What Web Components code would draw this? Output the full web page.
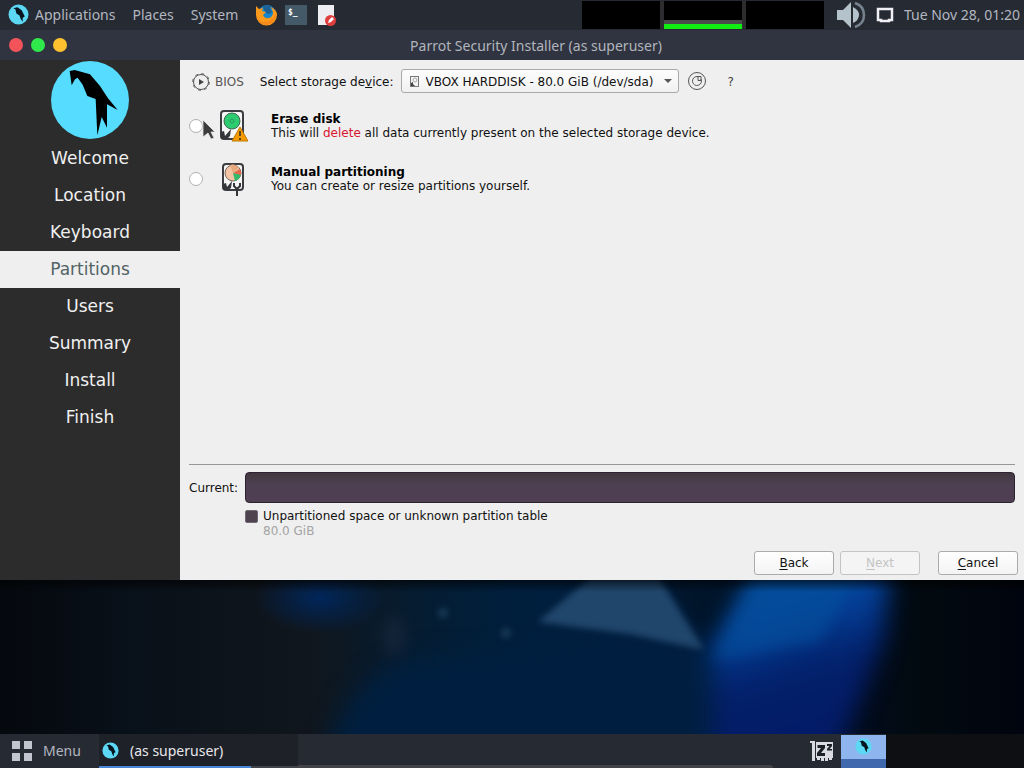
<!DOCTYPE html>
<html lang="en">
<head>
<meta charset="utf-8">
<title>Parrot Security Installer</title>
<style>
    html, body {
        height: 100%;
        margin: 0;
    }
    body {
        display: flex;
        flex-direction: column;
        overflow: hidden;
        background: #05090f;
        font-family: "Noto Sans", sans-serif;
        font-size: 14px;
        --panel: #262a33;
        --panel-text: #b3b7c0;
        --paper: #efefef;
        --side: #2c2c2c;
    }
    installer-window {
        flex: 1;
        min-height: 0;
    }
    em {
        font-style: normal;
        color: #d8152f;
    }
</style>
</head>
<body>
<top-panel></top-panel>
<installer-window heading="Parrot Security Installer (as superuser)">
    <step-list slot="side">
        <step-item>Welcome</step-item>
        <step-item>Location</step-item>
        <step-item>Keyboard</step-item>
        <step-item current>Partitions</step-item>
        <step-item>Users</step-item>
        <step-item>Summary</step-item>
        <step-item>Install</step-item>
        <step-item>Finish</step-item>
    </step-list>
    <device-picker></device-picker>
    <partition-choice>
        <svg slot="icon" width="32" height="36" viewBox="0 0 32 36">
            <rect x="5" y="3" width="22" height="28" rx="3" fill="#f6f6f6" stroke="#3b3d40" stroke-width="2"/>
            <circle cx="16" cy="13" r="8" fill="#2ecc71" stroke="#3f6650"/>
            <circle cx="16" cy="13" r="2" fill="none" stroke="#269e58"/>
            <path d="M5 31V24l3-1 1 5 6-7-1 7-3 3z" fill="#34363a"/>
            <path d="M24 19l8 14H16z" fill="#f59b00" stroke="#bf7700"/>
            <path d="M24 23v5M24 30v2" stroke="#2b2b2b" stroke-width="1.500"/>
        </svg>
        <span slot="name">Erase disk</span>
        This will <em>delete</em> all data currently present on the selected storage device.
    </partition-choice>
    <partition-choice>
        <svg slot="icon" width="32" height="36" viewBox="0 0 32 36">
            <rect x="7" y="3" width="20" height="26" rx="3" fill="#f6f6f6" stroke="#3b3d40" stroke-width="2"/>
            <circle cx="17" cy="12" r="8" fill="#f2c3a5" stroke="#77685d"/>
            <path d="M17 12l7-4q2 4 0 7z" fill="#e5674c"/>
            <path d="M17 12l8 2q-2 5-6 6z" fill="#37b96c"/>
            <path d="M17 12l-3-8q5-2 9 3z" fill="#e9a97f"/>
            <path d="M7 29v-6l3-1 1 4 5-6-1 7-3 2z" fill="#34363a"/>
            <path d="M18 22v3l3 3 3-3v-3M21 27v8" fill="none" stroke="#34363a" stroke-width="2"/>
        </svg>
        <span slot="name">Manual partitioning</span>
        You can create or resize partitions yourself.
    </partition-choice>
    <partition-bar slot="foot" label="Current:" size="80.0 GiB">Unpartitioned space or unknown partition table</partition-bar>
    <nav-buttons slot="foot"></nav-buttons>
</installer-window>
<desktop-wallpaper></desktop-wallpaper>
<bottom-panel></bottom-panel>
<mouse-pointer></mouse-pointer>

<script>
    // attaches an open shadow root filled from a template
    class BaseElement extends HTMLElement {
        constructor() {
            super();
            const shadow = this.attachShadow({mode: 'open'});
            const temp = document.createElement('template');
            temp.innerHTML = this.template();
            shadow.appendChild(temp.content.cloneNode(true));
        }
        $(sel) {
            return this.shadowRoot.querySelector(sel);
        }
    }

    class ParrotLogo extends BaseElement {
        template() {
            return `
            <style>
                :host { display: block; width: 80px; height: 80px; }
                svg { display: block; width: 100%; height: 100%; }
                .mini { display: none; }
                :host([small]) .full { display: none; }
                :host([small]) .mini { display: block; }
            </style>
            <svg class="full" viewBox="148 10 240 240">
                <circle cx="268" cy="130" r="117" fill="#55dcff"/>
                <path d="M207 43L222 40L268 53L298 88L322 125L351 160L319 143V213L303 181L290 236L285 127L260 118L246 84L231 63L223 68L213 86Z"/>
            </svg>
            <svg class="mini" viewBox="0 0 20 20">
                <circle cx="10" cy="10" r="9.500" fill="#5cd8f4"/>
                <path d="M5 4l4-1 4 3 3 6-2 1v4l-2-3-1-3-3-2-1-4z" fill="#06141f"/>
            </svg>`;
        }
    }

    class TopPanel extends BaseElement {
        template() {
            return `
            <style>
                :host {
                    display: flex;
                    align-items: center;
                    box-sizing: border-box;
                    height: 30px;
                    padding: 0 4px 1px 8px;
                    background: var(--panel);
                    color: var(--panel-text);
                }
                parrot-logo { width: 21px; height: 21px; margin-right: 6px; }
                button {
                    border: 0;
                    padding: 0;
                    margin-right: 17px;
                    background: none;
                    color: inherit;
                    font: inherit;
                }
                .launcher { margin-right: 8px; line-height: 0; }
                .graphs { display: flex; gap: 4px; margin-left: auto; margin-right: 12px; background: #2d2d2f; }
                .graph { width: 78px; height: 28px; background: #000; }
                .mem { background: linear-gradient(#000 19px, #4b4b4b 19px 23px, #12ee12 23px); }
                .tray { margin-right: 10px; }
            </style>
            <parrot-logo small></parrot-logo>
            <button>Applications</button>
            <button>Places</button>
            <button>System</button>
            <button class="launcher" aria-label="Firefox">
                <svg width="22" height="22" viewBox="0 0 22 22">
                    <circle cx="12" cy="10" r="9" fill="#1787c9"/>
                    <path d="M8 3q4-3 8 0l-1 2 2 3-3 2-3-1-2-3z" fill="#1e6096"/>
                    <path d="M1 2l3 3 4-1-1 3 4 1-3 3q2 4 6 3t4-6l-2-5q6 3 6 8a10.500 10.500 0 0 1-21 0q0-5 0-9z" fill="#fd9a1c"/>
                    <path d="M2 14q5 6 12 3 5-2 7-8 0 12-11 12-6-1-8-7z" fill="#f58a1a"/>
                </svg>
            </button>
            <button class="launcher" aria-label="Terminal">
                <svg width="22" height="20" viewBox="0 0 22 20">
                    <rect width="22" height="20" fill="#455a68"/>
                    <text x="3" y="10" font-family="DejaVu Sans Mono, monospace" font-weight="bold" font-size="8" fill="#fff">$_</text>
                </svg>
            </button>
            <button class="launcher" aria-label="Text editor">
                <svg width="22" height="22" viewBox="0 0 22 22">
                    <path d="M3 1h16v20H3z" fill="#eeeef2"/>
                    <circle cx="15.500" cy="16.500" r="5.500" fill="#df3e3e"/>
                    <path d="M13 19l1-3 3-3 2 2-3 3z" fill="#fff"/>
                </svg>
            </button>
            <div class="graphs">
                <div class="graph"></div>
                <div class="graph mem"></div>
                <div class="graph"></div>
            </div>
            <svg class="tray" width="30" height="28" viewBox="0 0 30 28">
                <path d="M1 9h6l8-8v26l-8-8H1z" fill="#b4c2cc"/>
                <path d="M17 6q6 3 6 8t-6 8z" fill="#b4c2cc"/>
                <path d="M19 2q9 3 9 12t-9 12" fill="none" stroke="#76838f" stroke-width="2.500"/>
            </svg>
            <svg class="tray" width="18" height="18" viewBox="0 0 18 18">
                <path d="M2 3h14v11h-3v1H5v-1H2z" fill="none" stroke="#f0f0f4" stroke-width="2.500"/>
            </svg>
            <time>Tue Nov 28, 01:20</time>`;
        }
    }

    class InstallerWindow extends BaseElement {
        template() {
            return `
            <style>
                :host {
                    display: flex;
                    flex-direction: column;
                    background: var(--paper);
                }
                header {
                    display: flex;
                    align-items: center;
                    height: 30px;
                    background: #303440;
                    color: #b0b4bd;
                }
                .lights { display: flex; gap: 8px; padding-left: 9px; }
                .lights button {
                    width: 14px;
                    height: 14px;
                    padding: 0;
                    border: 0;
                    border-radius: 50%;
                    background: var(--light);
                }
                h1 {
                    flex: 1;
                    margin: 0;
                    padding-right: 19px;
                    font-size: 14px;
                    font-weight: normal;
                    text-align: center;
                }
                .body {
                    display: grid;
                    grid-template-columns: 180px 1fr;
                    flex: 1;
                    font-family: "DejaVu Sans", sans-serif;
                    font-size: 12px;
                    line-height: 14px;
                    color: #111;
                }
                aside { background: var(--side); }
                main {
                    display: flex;
                    flex-direction: column;
                    gap: 15px;
                    padding: 9px 6px 5px 9px;
                }
                .foot { margin-top: auto; }
            </style>
            <header>
                <div class="lights">
                    <button aria-label="Close" style="--light:#f3545c"></button>
                    <button aria-label="Maximize" style="--light:#2fe84b"></button>
                    <button aria-label="Minimize" style="--light:#fdc02f"></button>
                </div>
                <h1></h1>
            </header>
            <div class="body">
                <aside><slot name="side"></slot></aside>
                <main>
                    <slot></slot>
                    <div class="foot"><slot name="foot"></slot></div>
                </main>
            </div>`;
        }
        connectedCallback() {
            this.$('h1').textContent = this.getAttribute('heading');
        }
    }

    class StepList extends BaseElement {
        template() {
            return `
            <style>
                :host { display: block; }
                parrot-logo { margin: 0 auto; }
            </style>
            <parrot-logo></parrot-logo>
            <nav><slot></slot></nav>`;
        }
    }

    class StepItem extends BaseElement {
        template() {
            return `
            <style>
                :host {
                    display: block;
                    font-size: 17px;
                    line-height: 37px;
                    text-align: center;
                    color: #f0f0f0;
                }
                :host([current]) { background: var(--paper); color: #526366; }
            </style>
            <slot></slot>`;
        }
    }

    class DevicePicker extends BaseElement {
        template() {
            return `
            <style>
                :host { display: flex; align-items: center; height: 24px; }
                .bios { display: flex; align-items: center; gap: 5px; margin: 0 16px 0 3px; color: #555; }
                .pick { display: grid; align-items: center; margin: 0 8px 0 7px; }
                .pick > * { grid-area: 1 / 1; }
                .pick svg { pointer-events: none; z-index: 1; }
                .disk { margin-left: 9px; }
                .arrow { justify-self: end; margin-right: 7px; }
                label, .bios { padding-top: 1px; }
                select {
                    appearance: none;
                    width: 278px;
                    height: 24px;
                    padding: 1px 20px 0 24px;
                    border: 1px solid #a9a9a9;
                    border-radius: 3px;
                    background: linear-gradient(#fdfdfd, #f1f1f1);
                    font: inherit;
                    color: inherit;
                }
                button { border: 0; padding: 0; background: none; font: inherit; line-height: 0; color: #444; }
                .help { margin-left: 21px; padding-top: 1px; line-height: 14px; }
            </style>
            <span class="bios">
                <svg width="18" height="18" viewBox="0 0 18 18">
                    <circle cx="9" cy="9" r="7.500" fill="none" stroke="#555"/>
                    <circle cx="9" cy="9" r="8.300" fill="none" stroke="#555" stroke-dasharray="3 3.520"/>
                    <path d="M7 6l5 3-5 3z" fill="#444"/>
                </svg>
                BIOS
            </span>
            <label for="device">Select storage de<u>v</u>ice:</label>
            <span class="pick">
                <select id="device"><option>VBOX HARDDISK - 80.0 GiB (/dev/sda)</option></select>
                <svg class="disk" width="9" height="11" viewBox="0 0 9 11">
                    <rect x=".5" y=".5" width="8" height="10" fill="#f4f4f4" stroke="#777"/>
                    <circle cx="5" cy="4" r="2" fill="none" stroke="#aaa"/>
                    <path d="M1 10V7l2-1v2l2 2z" fill="#444"/>
                </svg>
                <svg class="arrow" width="8" height="4" viewBox="0 0 8 4"><path d="M0 0h8L4 4z" fill="#555"/></svg>
            </span>
            <button aria-label="Revert">
                <svg width="20" height="20" viewBox="0 0 20 20" fill="none" stroke="#555">
                    <circle cx="10" cy="10" r="8.500"/>
                    <path d="M14 8a4.500 4.500 0 1 1-4-2.500h4v4h-3V6"/>
                </svg>
            </button>
            <button class="help">?</button>`;
        }
    }

    class PartitionChoice extends BaseElement {
        template() {
            return `
            <style>
                :host { display: block; height: 38px; }
                label {
                    display: grid;
                    grid-template-columns: 14px 32px 1fr;
                    align-items: center;
                    height: 32px;
                }
                input {
                    appearance: none;
                    width: 14px;
                    height: 14px;
                    margin: 0;
                    border: 1px solid #b0b0b0;
                    border-radius: 50%;
                    background: #fff;
                }
                input:checked { background: radial-gradient(#444 3px, #fff 4px); }
                .icon { padding-left: 13px; height: 36px; }
                .text { padding-left: 36px; }
                b { display: block; color: #000; }
            </style>
            <label>
                <input type="radio">
                <span class="icon"><slot name="icon"></slot></span>
                <span class="text"><b><slot name="name"></slot></b><slot></slot></span>
            </label>`;
        }
        connectedCallback() {
            // radios in separate shadow roots don't group by name
            this.$('input').addEventListener('change', () => {
                this.parentNode.querySelectorAll('partition-choice').forEach(other => {
                    if (other !== this) other.$('input').checked = false;
                });
            });
        }
    }

    class PartitionBar extends BaseElement {
        template() {
            return `
            <style>
                :host {
                    display: grid;
                    grid-template-columns: 56px 1fr;
                    align-items: center;
                    row-gap: 6px;
                    margin-right: 3px;
                }
                hr {
                    grid-column: 1 / -1;
                    width: 100%;
                    margin: 0 0 1px;
                    border: 0;
                    border-top: 1px solid #969696;
                }
                .bar {
                    box-sizing: border-box;
                    height: 31px;
                    border: 1px solid #2d2231;
                    border-radius: 4px;
                    background: linear-gradient(#42373f, #4e4052 40%, #4e4052);
                }
                .legend {
                    grid-column: 2;
                    display: grid;
                    grid-template-columns: 18px 1fr;
                    align-items: center;
                }
                .swatch {
                    box-sizing: border-box;
                    width: 13px;
                    height: 13px;
                    border: 1px solid #6f6872;
                    border-radius: 2px;
                    background: #4d444f;
                }
                .size { grid-column: 2; line-height: 16px; color: #a3a3a3; }
            </style>
            <hr>
            <span class="label"></span>
            <div class="bar"></div>
            <div class="legend">
                <span class="swatch"></span>
                <span><slot></slot></span>
                <span class="size"></span>
            </div>`;
        }
        connectedCallback() {
            this.$('.label').textContent = this.getAttribute('label');
            this.$('.size').textContent = this.getAttribute('size');
        }
    }

    class NavButtons extends BaseElement {
        template() {
            return `
            <style>
                :host { display: flex; justify-content: flex-end; gap: 6px; margin-top: 12px; }
                button {
                    width: 80px;
                    height: 24px;
                    border: 1px solid #ababab;
                    border-radius: 3px;
                    background: linear-gradient(#fefefe, #f4f4f4);
                    font: inherit;
                    color: #111;
                }
                button:disabled { border-color: #c4c4c4; background: #f4f4f4; color: #c4c4c4; }
                .cancel { margin-left: 12px; }
                u { text-underline-offset: 2px; }
            </style>
            <button><u>B</u>ack</button>
            <button disabled><u>N</u>ext</button>
            <button class="cancel"><u>C</u>ancel</button>`;
        }
    }

    class DesktopWallpaper extends BaseElement {
        template() {
            return `
            <style>
                :host { display: block; height: 154px; }
                svg { display: block; width: 100%; height: 100%; }
            </style>
            <svg viewBox="0 0 1024 154" preserveAspectRatio="none">
                <defs>
                    <linearGradient id="base">
                        <stop offset="0" stop-color="#05080d"/>
                        <stop offset=".12" stop-color="#081019"/>
                        <stop offset=".3" stop-color="#10161d"/>
                        <stop offset=".4" stop-color="#061c30"/>
                        <stop offset=".5" stop-color="#001f3d"/>
                        <stop offset=".68" stop-color="#001e40"/>
                        <stop offset=".84" stop-color="#020b1c"/>
                        <stop offset=".9" stop-color="#020a10"/>
                        <stop offset="1" stop-color="#01040e"/>
                    </linearGradient>
                    <linearGradient id="beam" x2=".25" y2="1">
                        <stop offset="0" stop-color="#04509c"/>
                        <stop offset=".35" stop-color="#04429a"/>
                        <stop offset=".62" stop-color="#03206a"/>
                        <stop offset="1" stop-color="#031a68"/>
                    </linearGradient>
                    <linearGradient id="shade" x2="0" y2="1">
                        <stop offset="0" stop-color="#000" stop-opacity=".6"/>
                        <stop offset="1" stop-color="#000" stop-opacity="0"/>
                    </linearGradient>
                    <radialGradient id="glow">
                        <stop offset="0" stop-color="#00265a"/>
                        <stop offset="1" stop-color="#00265a" stop-opacity="0"/>
                    </radialGradient>
                    <filter id="wide" x="-30%" y="-30%" width="160%" height="160%" color-interpolation-filters="sRGB"><feGaussianBlur stdDeviation="12"/></filter>
                    <filter id="mid" x="-30%" y="-30%" width="160%" height="160%" color-interpolation-filters="sRGB"><feGaussianBlur stdDeviation="7"/></filter>
                    <filter id="thin" x="-60%" y="-60%" width="220%" height="220%" color-interpolation-filters="sRGB"><feGaussianBlur stdDeviation="3"/></filter>
                </defs>
                <rect width="1024" height="154" fill="url(#base)"/>
                <ellipse cx="320" cy="18" rx="66" ry="36" fill="url(#glow)"/>
                <path d="M325 190Q340 100 410 80L730 60V190z" fill="#001f40" filter="url(#wide)"/>
                <path d="M664 0h90l-48 60z" fill="#01152a" filter="url(#mid)"/>
                <path d="M760-20H890L884 60 830 190H712V70z" fill="url(#beam)" filter="url(#wide)"/>
                <path d="M757-10H860L820 60 712 80z" fill="#04509c" opacity=".6" filter="url(#mid)"/>
                <path d="M592-4H658L704 70 630 54 538 42z" fill="#20466b" filter="url(#thin)"/>
                <ellipse cx="394" cy="56" rx="12" ry="20" fill="#1b2940" opacity=".6" filter="url(#mid)"/>
                <circle cx="443" cy="33" r="5" fill="#183b58" filter="url(#thin)"/>
                <circle cx="506" cy="53" r="5" fill="#183b58" filter="url(#thin)"/>
                <rect width="1024" height="12" fill="url(#shade)"/>
            </svg>`;
        }
    }

    class BottomPanel extends BaseElement {
        template() {
            return `
            <style>
                :host { display: flex; height: 34px; background: #0e0f12; color: var(--panel-text); }
                .bar { display: flex; flex: 1; margin-right: 138px; background: var(--panel); }
                button { border: 0; padding: 0; background: none; font: inherit; color: inherit; }
                .menu { display: flex; align-items: center; gap: 11px; width: 99px; padding: 0 0 1px 12px; }
                .task {
                    display: flex;
                    align-items: center;
                    gap: 11px;
                    box-sizing: border-box;
                    width: 199px;
                    padding: 0 0 1px 3px;
                    background: linear-gradient(90deg, #4a86d8 152px, #434449 152px) bottom / 100% 2px no-repeat #1e2128;
                    color: #e8e8ec;
                }
                parrot-logo { width: 17px; height: 17px; }
                .strip { align-self: end; flex: 1; height: 3px; margin-right: 37px; border-radius: 0 3px 0 0; background: #434449; }
                .sleep { align-self: center; margin-right: 7px; }
                .pager {
                    display: flex;
                    justify-content: center;
                    width: 45px;
                    padding-top: 4px;
                    box-sizing: border-box;
                    background: linear-gradient(var(--panel) 1px, #8eb5ee 1px 25px, #4068ac 25px);
                }
            </style>
            <div class="bar">
                <button class="menu">
                    <svg width="20" height="20" viewBox="0 0 20 20"><path d="M0 0h8v8H0zM12 0h8v8h-8zM0 12h8v8H0zM12 12h8v8h-8z" fill="#c3c6d0"/></svg>
                    Menu
                </button>
                <button class="task"><parrot-logo small></parrot-logo>(as superuser)</button>
                <div class="strip"></div>
                <svg class="sleep" width="24" height="22" viewBox="0 0 24 22">
                    <path d="M0 1h5v20H2V3H0z" fill="#d9dae2"/>
                    <path d="M6 2h17v16h-1v2h-3v-2h-1v3h-3v-3h-1v3h-3v-3h-1v2H7v-2H6z" fill="#d9dae2"/>
                    <path d="M7.500 5H15v3l-4 5h4v3H7v-3l4-5H7.500zM17 4h5v2l-2.500 3H22v1.500h-5V9l2.500-3H17z" fill="#1c1f28"/>
                </svg>
                <div class="pager"><parrot-logo small></parrot-logo></div>
            </div>`;
        }
    }

    class MousePointer extends BaseElement {
        template() {
            return `
            <style>
                :host { position: absolute; left: 202px; top: 119px; pointer-events: none; line-height: 0; }
            </style>
            <svg width="14" height="22" viewBox="0 0 14 22">
                <path d="M1 1l12 12H9l3 6-3 1-3-6-5 4z" fill="#3c3c3c" stroke="#e6e6e6" stroke-width=".8"/>
            </svg>`;
        }
    }

    customElements.define('parrot-logo', ParrotLogo);
    customElements.define('top-panel', TopPanel);
    customElements.define('installer-window', InstallerWindow);
    customElements.define('step-list', StepList);
    customElements.define('step-item', StepItem);
    customElements.define('device-picker', DevicePicker);
    customElements.define('partition-choice', PartitionChoice);
    customElements.define('partition-bar', PartitionBar);
    customElements.define('nav-buttons', NavButtons);
    customElements.define('desktop-wallpaper', DesktopWallpaper);
    customElements.define('bottom-panel', BottomPanel);
    customElements.define('mouse-pointer', MousePointer);
</script>
</body>
</html>
